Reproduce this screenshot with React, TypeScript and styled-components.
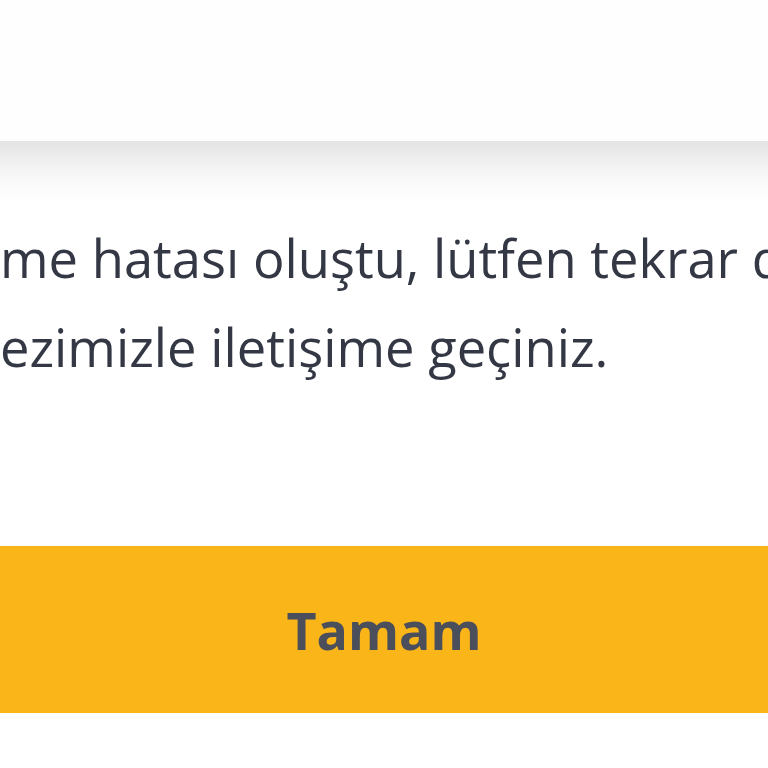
import React from "react";
import styled, { createGlobalStyle } from "styled-components";

const GlobalStyle = createGlobalStyle`
  html, body {
    margin: 0;
    padding: 0;
    background: #ffffff;
  }
  body {
    font-family: "Open Sans", "Noto Sans", sans-serif;
  }
`;

const Screen = styled.div`
  width: 768px;
  height: 768px;
  overflow: hidden;
  display: flex;
  flex-direction: column;
  background: #ffffff;
`;

const Header = styled.div`
  height: 141px;
  flex: none;
  background: #fefefe;
`;

const Body = styled.div`
  flex: none;
  padding-top: 72px;
  padding-bottom: 155px;
  background: linear-gradient(180deg, #e3e3e3 0px, #f0f0f0 20px, #fafafa 42px, #ffffff 62px);
  overflow: hidden;
`;

const Line = styled.div`
  white-space: nowrap;
  font-family: "Open Sans", "Noto Sans", sans-serif;
  font-size: 52.5px;
  line-height: 89px;
  color: #343845;
`;

const ConfirmButton = styled.button`
  flex: none;
  height: 167px;
  width: 100%;
  border: 0;
  margin: 0;
  padding: 0;
  background: #fab619;
  font-family: "Open Sans", "Noto Sans", sans-serif;
  font-weight: 700;
  font-size: 52px;
  color: #4b4e5b;
  cursor: pointer;
`;

const Footer = styled.div`
  flex: 1;
  background: #ffffff;
`;

export default function App() {
  return (
    <>
      <GlobalStyle />
      <Screen>
        <Header />
        <Body>
          <Line>me hatası oluştu, lütfen tekrar deneyiniz veya</Line>
          <Line>ezimizle iletişime geçiniz.</Line>
        </Body>
        <ConfirmButton>Tamam</ConfirmButton>
        <Footer />
      </Screen>
    </>
  );
}
